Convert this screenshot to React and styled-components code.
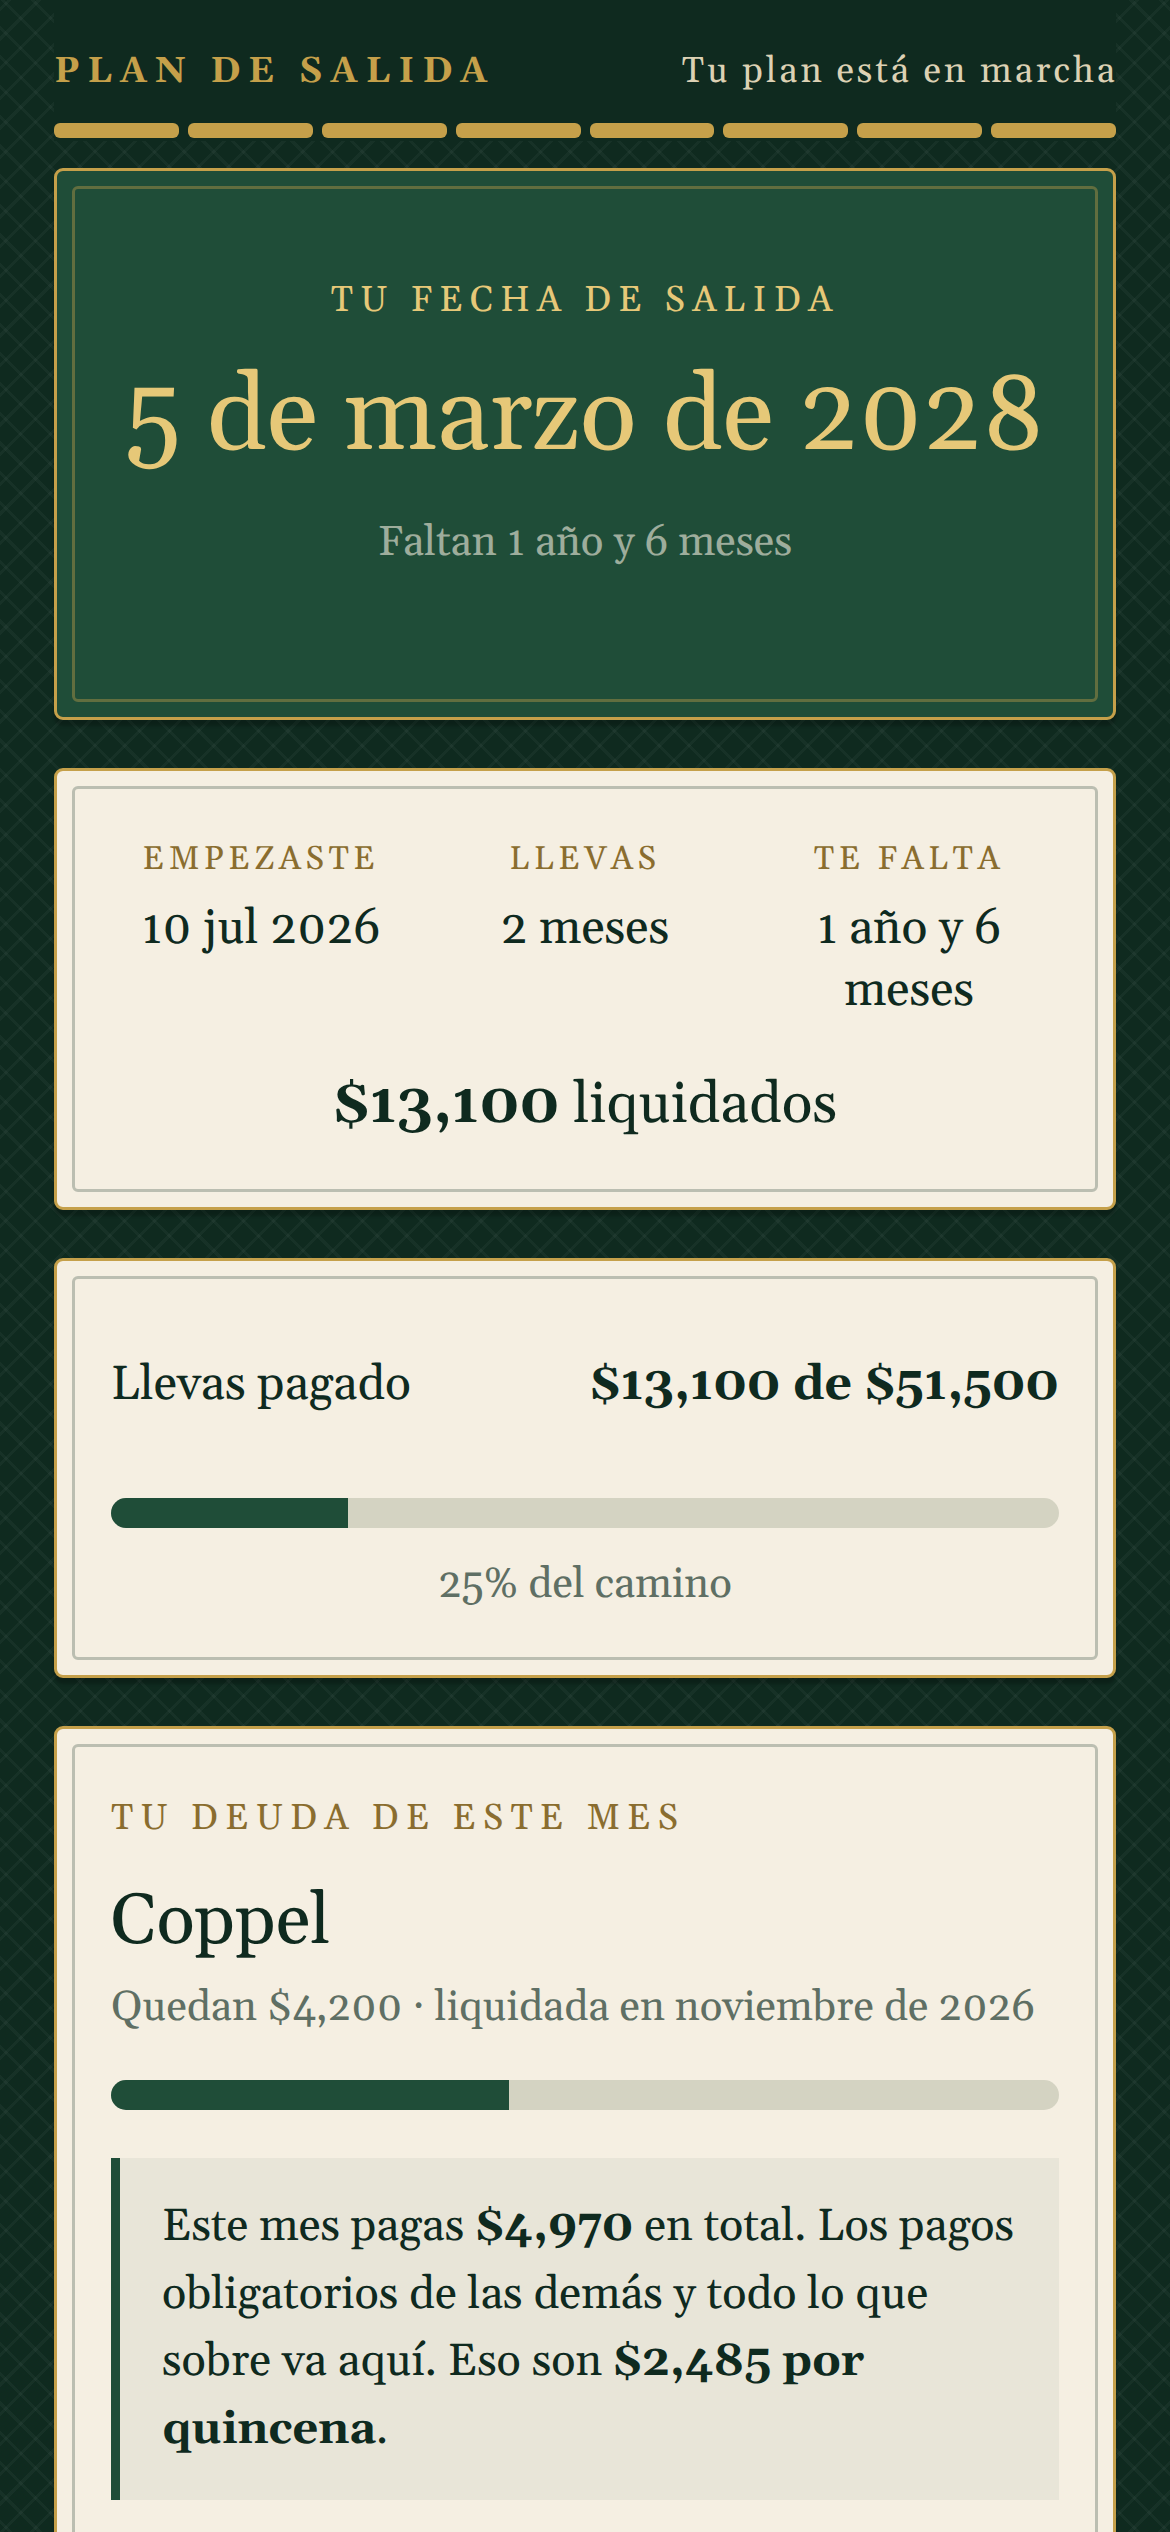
import React from "react";
import styled, { createGlobalStyle } from "styled-components";

const serif = `Gelasio, Georgia, "Liberation Serif", serif`;

const GlobalStyle = createGlobalStyle`
  html, body {
    margin: 0;
    padding: 0;
    background: #0f2a1f;
  }
  * { box-sizing: border-box; }
`;

const Page = styled.div`
  height: 2532px;
  overflow: hidden;
  padding: 0 54px;
  font-family: ${serif};
  font-variant-numeric: oldstyle-nums;
  text-rendering: geometricPrecision;
  color: #0f2a1f;
  background-color: #0f2a1f;
  background-image:
    repeating-linear-gradient(45deg, transparent 0 18px, rgba(255,255,255,0.035) 18px 21px),
    repeating-linear-gradient(-45deg, transparent 0 18px, rgba(255,255,255,0.035) 18px 21px);
  background-size: 100% 2549.4px;
`;

const Header = styled.header`
  background: #0f2a1f;
  padding: 50px 0 3px;
  margin-bottom: 27px;
`;

const TopRow = styled.div`
  display: flex;
  justify-content: space-between;
  align-items: center;
  margin-bottom: 28px;
`;

const Brand = styled.div`
  font-size: 36px;
  font-weight: 700;
  letter-spacing: 7.92px;
  color: #c5a04a;
`;

const Status = styled.div`
  font-size: 36px;
  letter-spacing: 3px;
  margin-right: -2px;
  color: #dcd1b4;
`;

const Steps = styled.div`
  display: flex;
  gap: 9px;
`;

const Step = styled.span`
  flex: 1;
  height: 15px;
  border-radius: 6px;
  background: #c5a04a;
`;

const Card = styled.section`
  position: relative;
  margin-bottom: 48px;
  padding: 15px;
  border: 3px solid #c5a04a;
  border-radius: 9px;
  background: ${(p) => (p.$dark ? "#1f4d38" : "#f5efe2")};
  box-shadow: 0 6px 3px rgba(0, 0, 0, 0.22);
`;

const Inner = styled.div`
  border: 3px solid ${(p) => (p.$dark ? "rgba(197,160,74,0.4)" : "rgba(15,42,31,0.25)")};
  border-radius: 6px;
  padding: ${(p) => p.$pad};
  text-align: ${(p) => p.$align || "left"};
`;

const HeroLabel = styled.div`
  font-size: 36px;
  letter-spacing: 7.2px;
  color: #e6c878;
`;

const HeroDate = styled.div`
  margin: 30px 0 33px;
  font-size: 105.6px;
  line-height: 130px;
  white-space: nowrap;
  color: #e6c878;
`;

const HeroSub = styled.div`
  font-size: 42px;
  color: rgba(245, 239, 226, 0.6);
`;

const StatsGrid = styled.div`
  display: grid;
  grid-template-columns: repeat(3, 1fr);
  gap: 24px;
  text-align: center;
`;

const StatLabel = styled.div`
  font-size: 33px;
  letter-spacing: 4.5px;
  color: #8a6d2f;
  margin-bottom: 18px;
`;

const StatValue = styled.div`
  font-size: 48px;
  line-height: 61.5px;
`;

const Paid = styled.div`
  margin-top: 48px;
  text-align: center;
  font-size: 57px;
`;

const PayRow = styled.div`
  display: flex;
  justify-content: space-between;
  align-items: center;
  font-size: 48px;
  margin-bottom: 82px;
`;

const Track = styled.div`
  height: 30px;
  border-radius: 15px;
  overflow: hidden;
  background: #d4d3c2;
`;

const Fill = styled.div`
  height: 100%;
  background: #1f4d38;
`;

const Note = styled.div`
  margin-top: 31px;
  text-align: center;
  font-size: 42px;
  color: #5f6f64;
`;

const DebtLabel = styled.div`
  font-size: 36px;
  letter-spacing: 7.2px;
  color: #8a6d2f;
`;

const DebtName = styled.div`
  margin: 39px 0 16px;
  font-size: 71px;
  line-height: 85px;
`;

const DebtMeta = styled.div`
  font-size: 42px;
  color: #5f6f64;
  margin-bottom: 45px;
`;

const Callout = styled.div`
  margin-top: 48px;
  padding: 36px 42px;
  border-left: 9px solid #1f4d38;
  background: #e8e5d8;
  font-size: 45px;
  line-height: 67.5px;
`;

export default function App() {
  return (
    <Page>
      <GlobalStyle />
      <Header>
        <TopRow>
          <Brand>PLAN DE SALIDA</Brand>
          <Status>Tu plan está en marcha</Status>
        </TopRow>
        <Steps>
          {Array.from({ length: 8 }).map((_, i) => (
            <Step key={i} />
          ))}
        </Steps>
      </Header>

      <Card $dark>
        <Inner $dark $pad="90px 30px 129px" $align="center">
          <HeroLabel>TU FECHA DE SALIDA</HeroLabel>
          <HeroDate>5 de marzo de 2028</HeroDate>
          <HeroSub>Faltan 1 año y 6 meses</HeroSub>
        </Inner>
      </Card>

      <Card>
        <Inner $pad="50px 36px 47px">
          <StatsGrid>
            <div>
              <StatLabel>EMPEZASTE</StatLabel>
              <StatValue>10 jul 2026</StatValue>
            </div>
            <div>
              <StatLabel>LLEVAS</StatLabel>
              <StatValue>2 meses</StatValue>
            </div>
            <div>
              <StatLabel>TE FALTA</StatLabel>
              <StatValue>1 año y 6 meses</StatValue>
            </div>
          </StatsGrid>
          <Paid>
            <strong>$13,100</strong> liquidados
          </Paid>
        </Inner>
      </Card>

      <Card>
        <Inner $pad="76px 36px 45px">
          <PayRow>
            <span>Llevas pagado</span>
            <strong>$13,100 de $51,500</strong>
          </PayRow>
          <Track>
            <Fill style={{ width: "25%" }} />
          </Track>
          <Note>25% del camino</Note>
        </Inner>
      </Card>

      <Card>
        <Inner $pad="50px 36px 48px">
          <DebtLabel>TU DEUDA DE ESTE MES</DebtLabel>
          <DebtName>Coppel</DebtName>
          <DebtMeta>Quedan $4,200 · liquidada en noviembre de 2026</DebtMeta>
          <Track>
            <Fill style={{ width: "42%" }} />
          </Track>
          <Callout>
            Este mes pagas <strong>$4,970</strong> en total. Los pagos obligatorios de las demás y todo lo que sobre va aquí. Eso son <strong>$2,485 por quincena</strong>.
          </Callout>
        </Inner>
      </Card>
    </Page>
  );
}
